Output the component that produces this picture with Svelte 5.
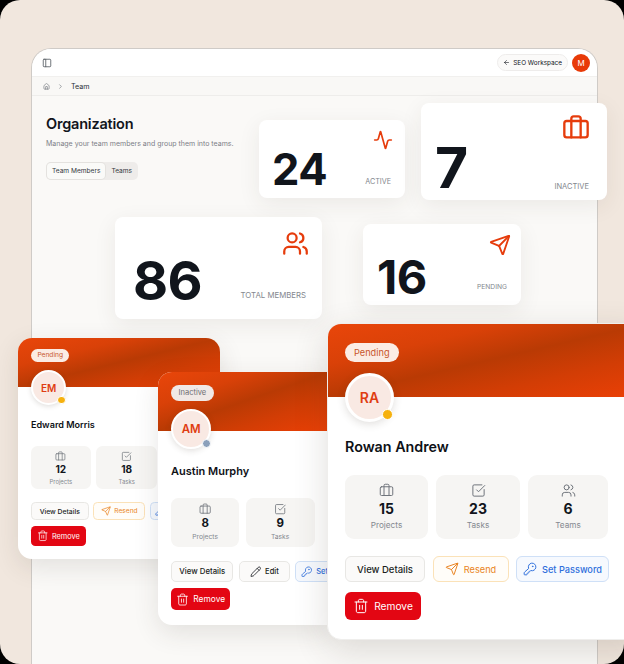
<script>
  const icons = {
    panel: ["M5 3h14a2 2 0 0 1 2 2v14a2 2 0 0 1-2 2H5a2 2 0 0 1-2-2V5a2 2 0 0 1 2-2z", "M9 3v18"],
    house: [
      "M15 21v-8a1 1 0 0 0-1-1h-4a1 1 0 0 0-1 1v8",
      "M3 10a2 2 0 0 1 .709-1.528l7-5.999a2 2 0 0 1 2.582 0l7 5.999A2 2 0 0 1 21 10v9a2 2 0 0 1-2 2H5a2 2 0 0 1-2-2z"
    ],
    chevron: ["m9 18 6-6-6-6"],
    arrow: ["m12 19-7-7 7-7", "M19 12H5"],
    activity: ["M22 12h-2.48a2 2 0 0 0-1.93 1.46l-2.35 8.36a.25.25 0 0 1-.48 0L9.24 2.18a.25.25 0 0 0-.48 0l-2.35 8.36A2 2 0 0 1 4.49 12H2"],
    briefcase: [
      "M4 6h16a2 2 0 0 1 2 2v10a2 2 0 0 1-2 2H4a2 2 0 0 1-2-2V8a2 2 0 0 1 2-2z",
      "M16 20V4a2 2 0 0 0-2-2h-4a2 2 0 0 0-2 2v16"
    ],
    users: [
      "M16 21v-2a4 4 0 0 0-4-4H6a4 4 0 0 0-4 4v2",
      "M13 7a4 4 0 1 1-8 0a4 4 0 1 1 8 0z",
      "M22 21v-2a4 4 0 0 0-3-3.87",
      "M16 3.13a4 4 0 0 1 0 7.75"
    ],
    send: [
      "M14.536 21.686a.5.5 0 0 0 .937-.024l6.5-19a.496.496 0 0 0-.635-.635l-19 6.5a.5.5 0 0 0-.024.937l7.93 3.18a2 2 0 0 1 1.112 1.11z",
      "m21.854 2.147-10.94 10.939"
    ],
    check: ["M21 10.5V19a2 2 0 0 1-2 2H5a2 2 0 0 1-2-2V5a2 2 0 0 1 2-2h12.5", "m9 11 3 3L22 4"],
    key: [
      "M2.586 17.414A2 2 0 0 0 2 18.828V21a1 1 0 0 0 1 1h3a1 1 0 0 0 1-1v-1a1 1 0 0 1 1-1h1a1 1 0 0 0 1-1v-1a1 1 0 0 1 1-1h.172a2 2 0 0 0 1.414-.586l.814-.814a6.5 6.5 0 1 0-4-4z",
      "M17 7.5a.5.5 0 1 1-1 0a.5.5 0 1 1 1 0z"
    ],
    pencil: [
      "M21.174 6.812a1 1 0 0 0-3.986-3.987L3.842 16.174a2 2 0 0 0-.5.83l-1.321 4.352a.5.5 0 0 0 .623.622l4.353-1.32a2 2 0 0 0 .83-.497z",
      "m15 5 4 4"
    ],
    trash: [
      "M3 6h18",
      "M19 6v14c0 1-1 2-2 2H7c-1 0-2-1-2-2V6",
      "M8 6V4c0-1 1-2 2-2h4c1 0 2 1 2 2v2",
      "M10 11v6",
      "M14 11v6"
    ]
  };

  const totals = [
    { id: "t-active", value: 24, label: "ACTIVE", icon: "activity" },
    { id: "t-inactive", value: 7, label: "INACTIVE", icon: "briefcase" },
    { id: "t-all", value: 86, label: "TOTAL MEMBERS", icon: "users" },
    { id: "t-pending", value: 16, label: "PENDING", icon: "send" }
  ];

  const members = [
    {
      id: "em", name: "Edward Morris", initials: "EM", status: "Pending",
      stats: [12, 18],
      actions: [["View Details", ""], ["Resend", "send"], ["Set Password", "key"]]
    },
    {
      id: "am", name: "Austin Murphy", initials: "AM", status: "Inactive",
      stats: [8, 9],
      actions: [["View Details", ""], ["Edit", "pencil"], ["Set Password", "key"]]
    },
    {
      id: "ra", name: "Rowan Andrew", initials: "RA", status: "Pending",
      stats: [15, 23, 6],
      actions: [["View Details", ""], ["Resend", "send"], ["Set Password", "key"]]
    }
  ];

  const statMeta = [
    ["Projects", "briefcase"],
    ["Tasks", "check"],
    ["Teams", "users"]
  ];
</script>

{#snippet icon(name)}
  <svg class="icon" viewBox="0 0 24 24" fill="none" stroke="currentColor" stroke-linecap="round" stroke-linejoin="round">
    {#each icons[name] as d}
      <path {d} />
    {/each}
  </svg>
{/snippet}

<div class="stage">
  <div class="panel">
    <div class="window">
      <header class="topbar">
        <span class="panel-btn">{@render icon("panel")}</span>
        <div class="top-right">
          <span class="workspace">{@render icon("arrow")} SEO Workspace</span>
          <span class="me">M</span>
        </div>
      </header>
      <nav class="crumbs">
        <span class="crumb-icon">{@render icon("house")}</span>
        <span class="crumb-icon">{@render icon("chevron")}</span>
        <span class="crumb-text">Team</span>
      </nav>
      <main class="content">
        <h1>Organization</h1>
        <p>Manage your team members and group them into teams.</p>
        <div class="tabs">
          <span class="tab on">Team Members</span>
          <span class="tab">Teams</span>
        </div>
      </main>
    </div>
  </div>

  {#each totals as t}
    <section class="total {t.id}">
      <div class="total-icon">{@render icon(t.icon)}</div>
      <div class="total-row">
        <strong>{t.value}</strong>
        <span>{t.label}</span>
      </div>
    </section>
  {/each}

  {#each members as m}
    <article class="member {m.id}">
      <div class="banner"></div>
      <div class="body">
        <span class="status s-{m.status.toLowerCase()}">{m.status}</span>
        <div class="avatar s-{m.status.toLowerCase()}">{m.initials}</div>
        <h2>{m.name}</h2>
        <div class="stats">
          {#each m.stats as n, i}
            <div class="stat">
              {@render icon(statMeta[i][1])}
              <b>{n}</b>
              <small>{statMeta[i][0]}</small>
            </div>
          {/each}
        </div>
        <div class="actions">
          {#each m.actions as [label, ic]}
            <button class={ic || "plain"}>
              {#if ic}{@render icon(ic)}{/if}
              {label}
            </button>
          {/each}
        </div>
        <button class="remove">{@render icon("trash")} Remove</button>
      </div>
    </article>
  {/each}
</div>

<style>
  :global(body) {
    margin: 0;
    background: #000;
  }

  .stage {
    position: relative;
    width: 624px;
    height: 664px;
    overflow: hidden;
    font-family: Inter, "Liberation Sans", sans-serif;
    color: #11151c;
  }

  .panel {
    box-sizing: border-box;
    height: 100%;
    padding: 48px 26px 0 31px;
    border-radius: 20px;
    background: #f1e7de;
  }

  .window {
    display: flex;
    flex-direction: column;
    height: 100%;
    box-sizing: border-box;
    border: 1px solid #cfcbc7;
    border-bottom: 0;
    border-radius: 20px 20px 0 0;
    background: #faf9f7;
    overflow: hidden;
  }

  .topbar {
    display: flex;
    align-items: center;
    justify-content: space-between;
    height: 27px;
    padding: 0 7px 0 10px;
    background: #fff;
    border-bottom: 1px solid #f1f0ee;
  }

  .panel-btn {
    display: flex;
    width: 10px;
    height: 10px;
    color: #555b63;
  }

  .top-right {
    display: flex;
    align-items: center;
    gap: 4px;
  }

  .workspace {
    display: flex;
    align-items: center;
    gap: 3px;
    height: 15px;
    padding: 0 5px;
    border: 1px solid #eeeceb;
    border-radius: 9px;
    background: #fbfaf9;
    font-size: 6.4px;
    font-weight: 400;
  }

  .workspace .icon {
    width: 7px;
    height: 7px;
    stroke-width: 2;
  }

  .me {
    display: grid;
    place-items: center;
    width: 18px;
    height: 18px;
    border-radius: 50%;
    background: #e83a08;
    color: #fff;
    font-size: 8px;
    font-weight: 400;
  }

  .crumbs {
    display: flex;
    align-items: center;
    height: 18px;
    padding: 0 0 0 11px;
    gap: 7px;
    border-bottom: 1px solid #eeedeb;
    background: #f9f8f6;
  }

  .crumb-icon {
    display: flex;
    width: 7px;
    height: 7px;
    color: #666b72;
  }

  .crumb-text {
    font-size: 7.2px;
    font-weight: 400;
    color: #2b2f36;
  }

  .content {
    flex: 1;
    padding: 19px 14px;
  }

  h1 {
    margin: 0;
    font-size: 14.5px;
    line-height: 18px;
    font-weight: 600;
    letter-spacing: -0.2px;
  }

  p {
    margin: 6px 0 0;
    font-size: 7px;
    line-height: 10px;
    color: #7c8087;
  }

  .tabs {
    display: inline-flex;
    margin-top: 13px;
    padding: 1px;
    border-radius: 5px;
    background: #eeecea;
  }

  .tab {
    padding: 0 5px;
    font-size: 6.6px;
    line-height: 16px;
    font-weight: 400;
    color: #33373d;
  }

  .tab.on {
    margin-right: 1px;
    border-radius: 4px;
    background: #fafaf8;
    box-shadow: 0 0 0 1px #e4e2df;
  }

  .icon {
    display: block;
    width: 100%;
    height: 100%;
    stroke-width: 2;
  }

  .total {
    position: absolute;
    box-sizing: border-box;
    display: flex;
    flex-direction: column;
    justify-content: space-between;
    border-radius: 8px;
    background: #fff;
    box-shadow: 0 6px 22px rgba(60, 50, 40, 0.08);
  }

  .total-icon {
    align-self: flex-end;
    color: #e63c0c;
  }

  .total-row {
    display: flex;
    align-items: flex-end;
    justify-content: space-between;
  }

  .total strong {
    font-weight: 700;
    line-height: 0.9;
    letter-spacing: -0.01em;
    color: #11151c;
  }

  .total span {
    color: #83878e;
    font-weight: 400;
    line-height: 1;
  }

  .t-active {
    left: 259px;
    top: 120px;
    width: 146px;
    height: 78px;
    padding: 10px 14px 12px 13px;
  }

  .t-active .total-icon {
    width: 20px;
    height: 20px;
    margin-right: -2px;
  }

  .t-active strong {
    font-size: 43.5px;
  }

  .t-active span {
    font-size: 7.2px;
    margin-bottom: 4px;
  }

  .t-inactive {
    left: 421px;
    top: 103px;
    width: 186px;
    height: 97px;
    padding: 11px 18px 15px 14px;
  }

  .t-inactive .total-icon {
    width: 28px;
    height: 28px;
    margin-right: -1px;
  }

  .t-inactive strong {
    font-size: 57px;
  }

  .t-inactive span {
    font-size: 7.5px;
    margin-bottom: 3px;
  }

  .t-all {
    left: 115px;
    top: 217px;
    width: 207px;
    height: 102px;
    padding: 13px 16px 18px 18px;
  }

  .t-all .total-icon {
    width: 27px;
    height: 27px;
    margin-right: -3px;
  }

  .t-all strong {
    font-size: 54px;
  }

  .t-all span {
    font-size: 7.8px;
    margin-bottom: 6px;
  }

  .t-pending {
    left: 363px;
    top: 224px;
    width: 158px;
    height: 81px;
    padding: 10px 14px 14px 14px;
  }

  .t-pending .total-icon {
    width: 22px;
    height: 22px;
    margin-right: -4px;
  }

  .t-pending strong {
    font-size: 47px;
  }

  .t-pending span {
    font-size: 6.7px;
    margin-bottom: 8px;
  }

  .member {
    position: absolute;
    box-sizing: border-box;
    border-radius: 14px;
    background: #fff;
    box-shadow: 0 8px 26px rgba(60, 50, 40, 0.12);
    overflow: hidden;
  }

  .banner {
    height: 73px;
    background: linear-gradient(to bottom right, #e9460a 0%, #d94108 28%, #b93a04 50%, #d23d05 72%, #ec4006 100%);
  }

  .body {
    position: absolute;
    inset: 0;
    padding: 19px 17px 0;
  }

  .status {
    display: inline-block;
    height: 19px;
    padding: 0 9px;
    border-radius: 10px;
    font-size: 9.2px;
    line-height: 19px;
    font-weight: 400;
    background: #fbece4;
    color: #c8552b;
    vertical-align: top;
  }

  .status.s-inactive {
    background: #f0e9e6;
    color: #6e6f74;
  }

  .avatar {
    position: relative;
    display: grid;
    place-items: center;
    box-sizing: border-box;
    width: 49px;
    height: 49px;
    margin-top: 10px;
    border: 3px solid #fff;
    border-radius: 50%;
    background: #f9e9e3;
    color: #df3d12;
    font-size: 14px;
    font-weight: 600;
    box-shadow: 0 2px 8px rgba(60, 50, 40, 0.16);
  }

  .avatar::after {
    content: "";
    position: absolute;
    right: -2px;
    bottom: -1px;
    width: 9px;
    height: 9px;
    border: 1px solid #fff;
    border-radius: 50%;
    background: #f6b10e;
  }

  .avatar.s-inactive::after {
    background: #8ba0bb;
  }

  h2 {
    margin: 15px 0 0;
    font-size: 14.3px;
    line-height: 19px;
    font-weight: 600;
    color: #0e1116;
    white-space: nowrap;
  }

  .stats {
    display: grid;
    grid-template-columns: 83px 84px 80px;
    gap: 8px;
    margin-top: 19px;
  }

  .stat {
    display: flex;
    flex-direction: column;
    align-items: center;
    height: 64px;
    box-sizing: border-box;
    padding-top: 8px;
    border-radius: 9px;
    background: #f6f5f3;
  }

  .stat .icon {
    width: 15px;
    height: 15px;
    stroke-width: 1.6;
    color: #70757c;
  }

  .stat b {
    margin-top: 2px;
    font-size: 14px;
    line-height: 17px;
    font-weight: 700;
  }

  .stat small {
    margin-top: 2px;
    font-size: 8.2px;
    line-height: 13px;
    color: #858990;
  }

  .actions {
    display: flex;
    gap: 7.5px;
    margin-top: 17px;
  }

  button {
    display: inline-flex;
    align-items: center;
    justify-content: center;
    flex: none;
    box-sizing: border-box;
    gap: 5px;
    height: 26px;
    padding: 0;
    border: 1px solid #e8e7e4;
    border-radius: 6px;
    background: #fbfaf9;
    font-family: inherit;
    font-size: 9.2px;
    font-weight: 500;
    color: #1a1d22;
    white-space: nowrap;
  }

  button .icon {
    width: 14px;
    height: 14px;
    stroke-width: 1.7;
  }

  .plain {
    width: 80px;
    font-size: 9.5px;
  }

  .send {
    width: 76px;
    border-color: #fbe2b8;
    background: #fffdf9;
    color: #e98422;
    font-weight: 400;
  }

  .pencil {
    width: 62px;
  }

  .key {
    width: 93px;
    border-color: #cfe0f7;
    background: #f6f9fe;
    color: #2f6fdc;
  }

  .remove {
    width: 76px;
    height: 28px;
    margin-top: 10px;
    border: 0;
    border-radius: 6px;
    background: #e30613;
    color: #fff;
    font-size: 10.2px;
    font-weight: 400;
  }

  .remove .icon {
    width: 16px;
    height: 16px;
    stroke-width: 1.5;
  }

  .em {
    left: 18px;
    top: 338px;
    width: 202px;
    height: 221px;
  }

  .am {
    left: 158px;
    top: 372px;
    width: 171px;
    height: 253px;
    border-radius: 14px 0 0 14px;
  }

  .ra {
    left: 327px;
    top: 323px;
    width: 320px;
    height: 317px;
    border: 1px solid #efeeec;
    box-shadow: 0 10px 34px rgba(60, 50, 40, 0.16);
  }

  .em .banner {
    height: 49px;
  }

  .am .banner {
    height: 59px;
  }

  .em .body {
    zoom: 0.72;
    padding: 15px 18px 0;
  }

  .em h2 {
    margin-top: 18px;
    font-size: 12.6px;
  }

  .em .stats {
    margin-top: 20px;
  }

  .em .stat {
    height: 60px;
    padding-top: 6px;
  }

  .em .actions {
    gap: 6px;
  }

  .em .send {
    width: 73px;
  }

  .em .remove {
    margin-top: 8px;
  }

  .am .body {
    zoom: 0.82;
    padding: 16px 16px 0;
  }

  .am h2 {
    margin-top: 17.5px;
    font-size: 13.4px;
  }

  .am .stats {
    margin-top: 22.6px;
  }

  .am .stat {
    height: 60px;
    padding-top: 6px;
  }

  .am .actions {
    gap: 6.5px;
  }

  .am .plain {
    width: 76px;
  }

  .am button {
    height: 25px;
  }

  .am .remove {
    width: 72px;
    height: 27px;
    margin-top: 8px;
  }
</style>
